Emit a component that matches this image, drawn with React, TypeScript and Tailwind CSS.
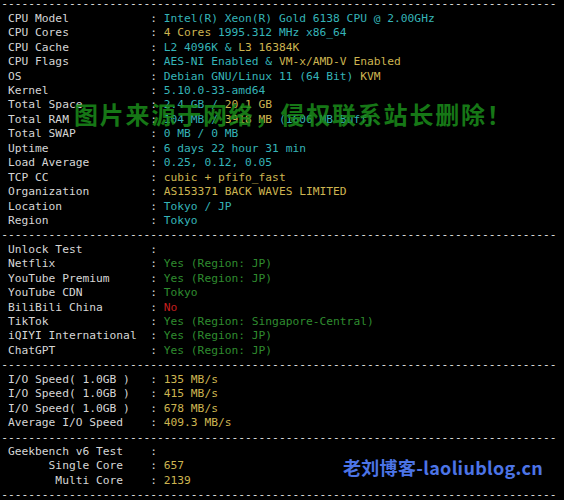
type Seg = { t: string; c?: "cyan" | "yellow" | "green" | "red" };

type Line =
  | { kind: "dash" }
  | { kind: "row"; label: string; segs: Seg[]; right?: boolean };

const colorClass: Record<string, string> = {
  cyan: "text-[#35b4b8]",
  yellow: "text-[#cdb550]",
  green: "text-[#2f8c2f]",
  red: "text-[#c41f1f]",
};

const row = (label: string, ...segs: Seg[]): Line => ({ kind: "row", label, segs });
const dash: Line = { kind: "dash" };
const cy = (t: string): Seg => ({ t, c: "cyan" });
const ye = (t: string): Seg => ({ t, c: "yellow" });
const gr = (t: string): Seg => ({ t, c: "green" });

const lines: Line[] = [
  dash,
  row("CPU Model", cy("Intel(R) Xeon(R) Gold 6138 CPU @ 2.00GHz")),
  row("CPU Cores", ye("4 Cores"), cy(" 1995.312 MHz x86_64")),
  row("CPU Cache", cy("L2 4096K & "), ye("L3 16384K")),
  row("CPU Flags", cy("AES-NI Enabled & "), ye("VM-x/AMD-V Enabled")),
  row("OS", cy("Debian GNU/Linux 11 (64 Bit) "), ye("KVM")),
  row("Kernel", cy("5.10.0-33-amd64")),
  row("Total Space", cy("2.4 GB / "), ye("20.1 GB")),
  row("Total RAM", cy("104 MB / "), ye("3918 MB"), cy(" (1606 MB Buff)")),
  row("Total SWAP", cy("0 MB / 0 MB")),
  row("Uptime", cy("6 days 22 hour 31 min")),
  row("Load Average", cy("0.25, 0.12, 0.05")),
  row("TCP CC", ye("cubic + pfifo_fast")),
  row("Organization", ye("AS153371 BACK WAVES LIMITED")),
  row("Location", cy("Tokyo / JP")),
  row("Region", cy("Tokyo")),
  dash,
  row("Unlock Test"),
  row("Netflix", gr("Yes (Region: JP)")),
  row("YouTube Premium", gr("Yes (Region: JP)")),
  row("YouTube CDN", gr("Tokyo")),
  row("BiliBili China", { t: "No", c: "red" }),
  row("TikTok", gr("Yes (Region: Singapore-Central)")),
  row("iQIYI International", gr("Yes (Region: JP)")),
  row("ChatGPT", gr("Yes (Region: JP)")),
  dash,
  row("I/O Speed( 1.0GB )", ye("135 MB/s")),
  row("I/O Speed( 1.0GB )", ye("415 MB/s")),
  row("I/O Speed( 1.0GB )", ye("678 MB/s")),
  row("Average I/O Speed", ye("409.3 MB/s")),
  dash,
  row("Geekbench v6 Test"),
  { kind: "row", label: "Single Core", segs: [ye("657")], right: true },
  { kind: "row", label: "Multi Core", segs: [ye("2139")], right: true },
  dash,
];

function TermLine({ line }: { line: Line }) {
  if (line.kind === "dash") {
    return <div className="text-[#e6e6e6]">{"-".repeat(82)}</div>;
  }
  const label = line.right ? line.label.padStart(17) : line.label.padEnd(21);
  return (
    <div className="text-[#d6d6d6]">
      {" " + (line.right ? label.padEnd(21) : label) + ": "}
      {line.segs.map((s, i) => (
        <span key={i} className={s.c ? colorClass[s.c] : ""}>
          {s.t}
        </span>
      ))}
    </div>
  );
}

export default function App() {
  return (
    <div className="relative w-[564px] h-[500px] overflow-hidden bg-black">
      <div className="-mt-[2.6px] pl-[1.2px] whitespace-pre font-['DejaVu_Sans_Mono',monospace] text-[11.26px] leading-[14.43px]">
        {lines.map((l, i) => (
          <TermLine key={i} line={l} />
        ))}
      </div>

      <div className="absolute left-[74px] top-[102px] whitespace-nowrap font-['Noto_Sans_CJK_SC',sans-serif] text-[24px] font-bold leading-none tracking-[1.8px] text-[#1b8c1b] opacity-85">
        图片来源于网络，侵权联系站长删除！
      </div>

      <div className="absolute left-[343px] top-[455px] whitespace-nowrap font-['Noto_Sans_CJK_SC',sans-serif] text-[18px] font-bold leading-[24px] tracking-[0.3px] text-[#4c74e6]">
        老刘博客-laoliublog.cn
      </div>
    </div>
  );
}
